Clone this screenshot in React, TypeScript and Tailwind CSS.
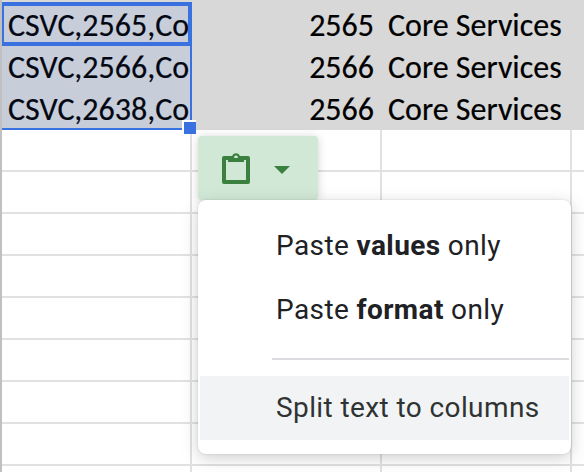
import type { ReactNode } from 'react';

const data = [
  ['CSVC,2565,Co', '2565', 'Core Services'],
  ['CSVC,2566,Co', '2566', 'Core Services'],
  ['CSVC,2638,Co', '2566', 'Core Services'],
];

function DataRow({ cells }: { cells: string[] }) {
  return (
    <div className="flex h-[42px] shrink-0 items-start whitespace-nowrap text-[32px] leading-[44px] text-black [-webkit-text-stroke:0.2px]">
      <div className="h-full w-[188px] overflow-hidden bg-[#c8cdda] pl-[6px] text-[#030712]">{cells[0]}</div>
      <div className="w-[192px] pr-2 text-right">{cells[1]}</div>
      <div className="pl-[6px]">{cells[2]}</div>
    </div>
  );
}

function EmptyRow() {
  return (
    <div className="flex h-[42px] shrink-0">
      {[0, 1, 2].map((c) => (
        <div key={c} className="w-[190px] border-b-2 border-r-2 border-[#e1e1e1]" />
      ))}
      <div className="grow border-b-2 border-[#e1e1e1]" />
    </div>
  );
}

function MenuItem({ children, active = false }: { children: ReactNode; active?: boolean }) {
  return (
    <div
      className={`mx-[2px] flex h-16 items-center whitespace-pre pl-[76px] text-[28px] tracking-[0.4px] ${
        active ? 'bg-[#f1f3f4] text-[#303333]' : 'text-[#202124]'
      }`}
    >
      <span>{children}</span>
    </div>
  );
}

export default function App() {
  return (
    <div className="relative h-[472px] w-[584px] overflow-hidden border-l-2 border-[#c0c0c0] bg-white font-['Carlito','Lato',sans-serif]">
      <div className="flex flex-col">
        <div className="h-[130px] overflow-hidden bg-[#d8d8d8] pt-1">
          {data.map((r, i) => (
            <DataRow key={i} cells={r} />
          ))}
        </div>
        {Array.from({ length: 9 }, (_, i) => (
          <EmptyRow key={i} />
        ))}
      </div>

      {/* Selected range, active cell and fill handle */}
      <div className="absolute left-0 top-[2px] h-[128px] w-[190px] border-b-2 border-r-2 border-[#3972e0]" />
      <div className="absolute left-0 top-[2px] h-[44px] w-[190px] border-4 border-l-2 border-[#3972e0]" />
      <div className="absolute left-[180px] top-[120px] h-[14px] w-[14px] border-l-2 border-t-2 border-white bg-[#3972e0]" />

      {/* Paste options */}
      <div className="absolute left-[196px] top-[136px] w-[373px] font-['Roboto',sans-serif]">
        <div className="flex h-16 w-[120px] items-center rounded bg-[#d2e8d6] shadow-[0_1px_10px_rgba(0,0,0,0.18)]">
          <svg className="ml-6 h-8 w-7 shrink-0" viewBox="0 0 28 32">
            <path
              fill="#3b803f"
              fillRule="evenodd"
              d="M2 4h8.2a4 4 0 0 1 7.6 0H26a2 2 0 0 1 2 2v24a2 2 0 0 1-2 2H2a2 2 0 0 1-2-2V6a2 2 0 0 1 2-2ZM4 8v20h20V8h-2v2H6V8ZM14 3.6a1.6 1.6 0 0 0-1.8 1.6V6h3.6v-.8A1.6 1.6 0 0 0 14 3.6Z"
            />
          </svg>
          <svg className="ml-6 mt-[3px] h-2 w-4" viewBox="0 0 16 8">
            <path fill="#3b803f" d="M0 0h16L8 8z" />
          </svg>
        </div>
        <div className="relative h-[254px] rounded-lg bg-white pt-[14px] shadow-[0_4px_16px_rgba(60,64,67,0.26),0_0_2px_rgba(60,64,67,0.2)]">
          <MenuItem>
            Paste <b>values</b> only
          </MenuItem>
          <MenuItem>
            Paste <b>format</b> only
          </MenuItem>
          <div className="mb-4 ml-[74px] mr-[2px] mt-4 h-[2px] bg-[#dadce0]" />
          <MenuItem active>Split text to columns</MenuItem>
        </div>
      </div>
    </div>
  );
}
